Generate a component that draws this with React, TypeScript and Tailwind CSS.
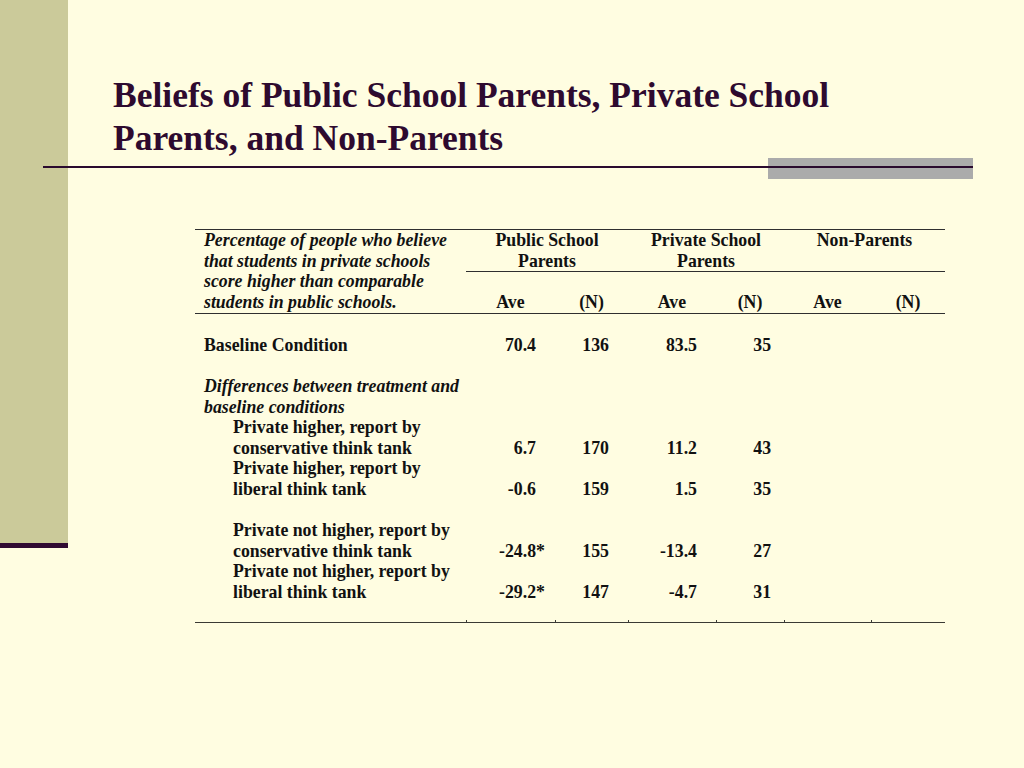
const serif = "font-['Liberation_Serif','Times_New_Roman',serif]"

type Row = { label?: string; indent?: boolean; italic?: boolean; vals?: [string, string, string, string] }

const body: Row[] = [
  {},
  { label: 'Baseline Condition', vals: ['70.4', '136', '83.5', '35'] },
  {},
  { label: 'Differences between treatment and', italic: true },
  { label: 'baseline conditions', italic: true },
  { label: 'Private higher, report by', indent: true },
  { label: 'conservative think tank', indent: true, vals: ['6.7', '170', '11.2', '43'] },
  { label: 'Private higher, report by', indent: true },
  { label: 'liberal think tank', indent: true, vals: ['-0.6', '159', '1.5', '35'] },
  {},
  { label: 'Private not higher, report by', indent: true },
  { label: 'conservative think tank', indent: true, vals: ['-24.8*', '155', '-13.4', '27'] },
  { label: 'Private not higher, report by', indent: true },
  { label: 'liberal think tank', indent: true, vals: ['-29.2*', '147', '-4.7', '31'] },
]

function Num({ v }: { v: string }) {
  if (v.endsWith('*')) {
    return (
      <>
        {v.slice(0, -1)}
        <span className="inline-block mr-[-9px]">*</span>
      </>
    )
  }
  return <>{v}</>
}

export default function App() {
  return (
    <div className={`flex h-[768px] w-[1024px] overflow-hidden bg-[#fffde1] ${serif}`}>
      <aside className="flex w-[68px] shrink-0 flex-col">
        <div className="h-[543px] bg-[#cbca9a]" />
        <div className="h-[5px] bg-[#300a32]" />
      </aside>

      <main className="flex flex-1 flex-col">
        <h1 className="ml-[45px] mt-[74px] text-[35.5px] font-bold leading-[42.5px] text-[#2e0a2f]">
          Beliefs of Public School Parents, Private School
          <br />
          Parents, and Non-Parents
        </h1>

        <div className="ml-[-25px] mt-[-1px] flex h-[21px] w-[930px]">
          <div className="flex-1 pt-[8px]">
            <div className="h-[2px] bg-[#2a0a2e]" />
          </div>
          <div className="w-[205px] bg-[#ababab] pt-[8px]">
            <div className="h-[2px] bg-[#2a0a2e]" />
          </div>
        </div>

        <table className="ml-[127px] mt-[50px] w-[750px] table-fixed border-collapse text-[17.8px] font-bold leading-[20.6px] text-[#111]">
          <colgroup>
            <col className="w-[271px]" />
            <col className="w-[89px]" />
            <col className="w-[73px]" />
            <col className="w-[88px]" />
            <col className="w-[68px]" />
            <col className="w-[87px]" />
            <col className="w-[74px]" />
          </colgroup>
          <thead>
            <tr className="border-t border-[#2f2f2f]">
              <th rowSpan={2} className="border-b border-[#2f2f2f] p-0 pl-[9px] text-left align-top font-bold italic whitespace-nowrap">
                Percentage of people who believe
                <br />
                that students in private schools
                <br />
                score higher than comparable
                <br />
                students in public schools.
              </th>
              <th colSpan={2} className="h-[41px] border-b border-[#2f2f2f] p-0 text-center align-top font-bold">
                Public School
                <br />
                Parents
              </th>
              <th colSpan={2} className="border-b border-[#2f2f2f] p-0 text-center align-top font-bold">
                Private School
                <br />
                Parents
              </th>
              <th colSpan={2} className="border-b border-[#2f2f2f] p-0 text-center align-top font-bold">
                Non-Parents
              </th>
            </tr>
            <tr className="border-b border-[#2f2f2f]">
              {['Ave', '(N)', 'Ave', '(N)', 'Ave', '(N)'].map((h, i) => (
                <th key={i} className="h-[42px] p-0 pb-[1px] text-center align-bottom font-bold">
                  {h}
                </th>
              ))}
            </tr>
          </thead>
          <tbody>
            {body.map((r, i) => (
              <tr key={i} className="h-[20.6px]">
                <td
                  className={`p-0 whitespace-nowrap ${r.indent ? 'pl-[38px]' : 'pl-[9px]'} ${r.italic ? 'italic' : ''}`}
                >
                  {r.label ?? '\u00a0'}
                </td>
                <td className="p-0 pr-[19px] text-right">{r.vals && <Num v={r.vals[0]} />}</td>
                <td className="p-0 pr-[19px] text-right">{r.vals?.[1]}</td>
                <td className="p-0 pr-[19px] text-right">{r.vals?.[2]}</td>
                <td className="p-0 pr-[13px] text-right">{r.vals?.[3]}</td>
                <td className="p-0" />
                <td className="p-0" />
              </tr>
            ))}
            <tr className="h-[19.6px] border-b border-[#3a3a34]">
              <td className="p-0" />
              {[0, 1, 2, 3, 4, 5].map((k) => (
                <td key={k} className="p-0 align-bottom">
                  <div className="h-[2px] w-px bg-[#3a3a34]" />
                </td>
              ))}
            </tr>
          </tbody>
        </table>
      </main>
    </div>
  )
}
